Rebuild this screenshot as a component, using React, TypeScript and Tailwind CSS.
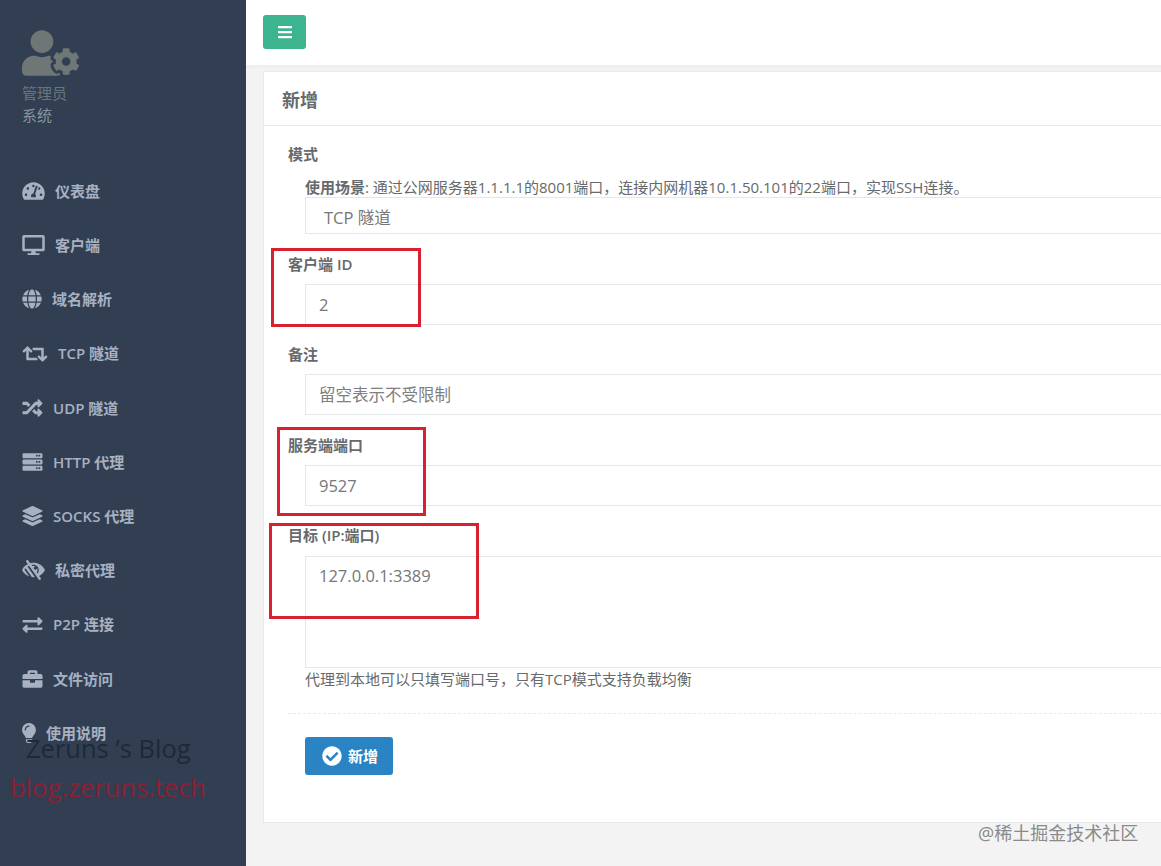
import type { ComponentType } from "react";
import {
  FaBars,
  FaBriefcase,
  FaCheckCircle,
  FaDesktop,
  FaExchangeAlt,
  FaGlobe,
  FaLayerGroup,
  FaLightbulb,
  FaLowVision,
  FaRandom,
  FaRetweet,
  FaServer,
  FaTachometerAlt,
  FaUserCog,
} from "react-icons/fa";

const FONT = "font-['Open_Sans','Noto_Sans_CJK_SC',sans-serif]";

type NavItem = { label: string; icon: ComponentType<{ className?: string }>; iconClass: string };

const NAV_ITEMS: NavItem[] = [
  { label: "仪表盘", icon: FaTachometerAlt, iconClass: "w-[33px] pr-[10px] h-[20px]" },
  { label: "客户端", icon: FaDesktop, iconClass: "w-[33px] pr-[10px] h-[20px]" },
  { label: "域名解析", icon: FaGlobe, iconClass: "w-[30px] pr-[10px] h-[20px]" },
  { label: "TCP 隧道", icon: FaRetweet, iconClass: "w-[36px] pr-[10px] h-[20px]" },
  { label: "UDP 隧道", icon: FaRandom, iconClass: "w-[31px] pr-[10px] h-[20px]" },
  { label: "HTTP 代理", icon: FaServer, iconClass: "w-[31px] pr-[10px] h-[20px]" },
  { label: "SOCKS 代理", icon: FaLayerGroup, iconClass: "w-[31px] pr-[10px] h-[20px]" },
  { label: "私密代理", icon: FaLowVision, iconClass: "w-[33px] pr-[10px] h-[20px]" },
  { label: "P2P 连接", icon: FaExchangeAlt, iconClass: "w-[31px] pr-[10px] h-[20px]" },
  { label: "文件访问", icon: FaBriefcase, iconClass: "w-[31px] pr-[10px] h-[20px]" },
  { label: "使用说明", icon: FaLightbulb, iconClass: "w-[24px] pr-[10px] h-[20px]" },
];

function Sidebar() {
  return (
    <aside className="relative h-full w-[246px] shrink-0 bg-[#323f52] text-[15px]">
      <div className="pl-[22px] pt-[30px]">
        <FaUserCog className="h-[46px] w-[57px] text-[#6f7676]" />
        <p className="mt-[7px] leading-[20px] text-[#68777b]">管理员</p>
        <p className="mt-[2px] leading-[20px] text-[#8794a0]">系统</p>
      </div>
      <nav className="mt-[39px]">
        {NAV_ITEMS.map((item) => (
          <a key={item.label} className="flex h-[54.2px] items-center pl-[22px] font-semibold text-[#a7b1c2]">
            <item.icon className={item.iconClass} />
            <span>{item.label}</span>
          </a>
        ))}
      </nav>
      <div className="absolute left-[26px] top-[728px] text-[25.5px] leading-[40px] text-[#1d2a3a]">Zeruns ’s Blog</div>
      <div className="absolute left-[10px] top-[767px] text-[25.5px] leading-[40px] text-[#8b2034]">blog.zeruns.tech</div>
    </aside>
  );
}

function Field({ label, children }: { label: string; children: React.ReactNode }) {
  return (
    <div>
      <label className="block pl-[24px] text-[15px] font-semibold leading-[18px]">{label}</label>
      <div className="mt-[11px] pl-[41px]">{children}</div>
    </div>
  );
}

const inputClass =
  "block h-[41px] w-full border border-[#e5e6e7] bg-white px-[13px] text-[16.5px] text-[#757779] placeholder:text-[#808080] outline-none";

function Highlight({ className }: { className: string }) {
  return <div className={`pointer-events-none absolute border-[3px] border-[#d9202e] ${className}`} />;
}

export default function App() {
  return (
    <div className={`relative flex h-[866px] w-[1161px] overflow-hidden bg-[#f3f3f4] text-[#676a6c] ${FONT}`}>
      <Sidebar />
      <main className="min-w-0 flex-1">
        <header className="flex h-[68px] items-start border-b-[3px] border-[#efefef] bg-white pl-[17px] pt-[15px]">
          <button className="flex h-[34px] w-[43px] items-center justify-center rounded-[3px] bg-[#3cb48f] text-white">
            <FaBars className="h-[16px] w-[16px]" />
          </button>
        </header>
        <section className="ml-[17px] mt-[3px] w-[1000px] border border-[#e7eaec] bg-white pb-[47px]">
          <h2 className="flex h-[54px] items-center border-b border-[#e7eaec] pl-[18px] pt-[3px] text-[18px] font-semibold">新增</h2>
          <form className="pt-[19px]">
            <div>
              <label className="block pl-[24px] text-[15px] font-semibold leading-[18px]">模式</label>
              <p className="mt-[14px] pl-[41px] text-[15px] leading-[20px]">
                <b className="font-semibold">使用场景</b>: 通过公网服务器1.1.1.1的8001端口，连接内网机器10.1.50.101的22端口，实现SSH连接。
              </p>
              <div className="pl-[41px]">
                <select className={`${inputClass} !h-[37px] appearance-none !pl-[18px] pt-[5px]`} defaultValue="tcp">
                  <option value="tcp">TCP 隧道</option>
                </select>
              </div>
            </div>
            <div className="mt-[21px]">
              <Field label="客户端 ID">
                <input className={inputClass} defaultValue="2" />
              </Field>
            </div>
            <div className="mt-[20px]">
              <Field label="备注">
                <input className={inputClass} placeholder="留空表示不受限制" />
              </Field>
            </div>
            <div className="mt-[21px]">
              <Field label="服务端端口">
                <input className={inputClass} defaultValue="9527" />
              </Field>
            </div>
            <div className="mt-[20px]">
              <Field label="目标 (IP:端口)">
                <div className="pt-[1px]">
                  <textarea
                    className="block h-[112px] w-full resize-none border border-[#e5e6e7] px-[13px] py-[7px] text-[16.5px] text-[#757779] outline-none"
                    defaultValue="127.0.0.1:3389"
                  />
                </div>
                <p className="mt-[1px] text-[15px] leading-[20px]">代理到本地可以只填写端口号，只有TCP模式支持负载均衡</p>
              </Field>
            </div>
            <div className="ml-[24px] mt-[24px] border-t border-dashed border-[#e7eaec] pl-[17px] pt-[23px]">
              <button type="button" className="flex h-[38px] w-[88px] items-center justify-center gap-[6px] rounded-[3px] bg-[#2a84c4] pl-[2px] text-[15px] font-semibold text-white">
                <FaCheckCircle className="h-[20px] w-[20px]" />
                新增
              </button>
            </div>
          </form>
        </section>
      </main>
      <Highlight className="left-[271px] top-[248px] h-[79px] w-[150px]" />
      <Highlight className="left-[277px] top-[427px] h-[89px] w-[149px]" />
      <Highlight className="left-[269px] top-[523px] h-[96px] w-[210px]" />
      <div className="absolute left-[978px] top-[821px] text-[18px] leading-[24px] text-[#8a8a8a]">@稀土掘金技术社区</div>
    </div>
  );
}
